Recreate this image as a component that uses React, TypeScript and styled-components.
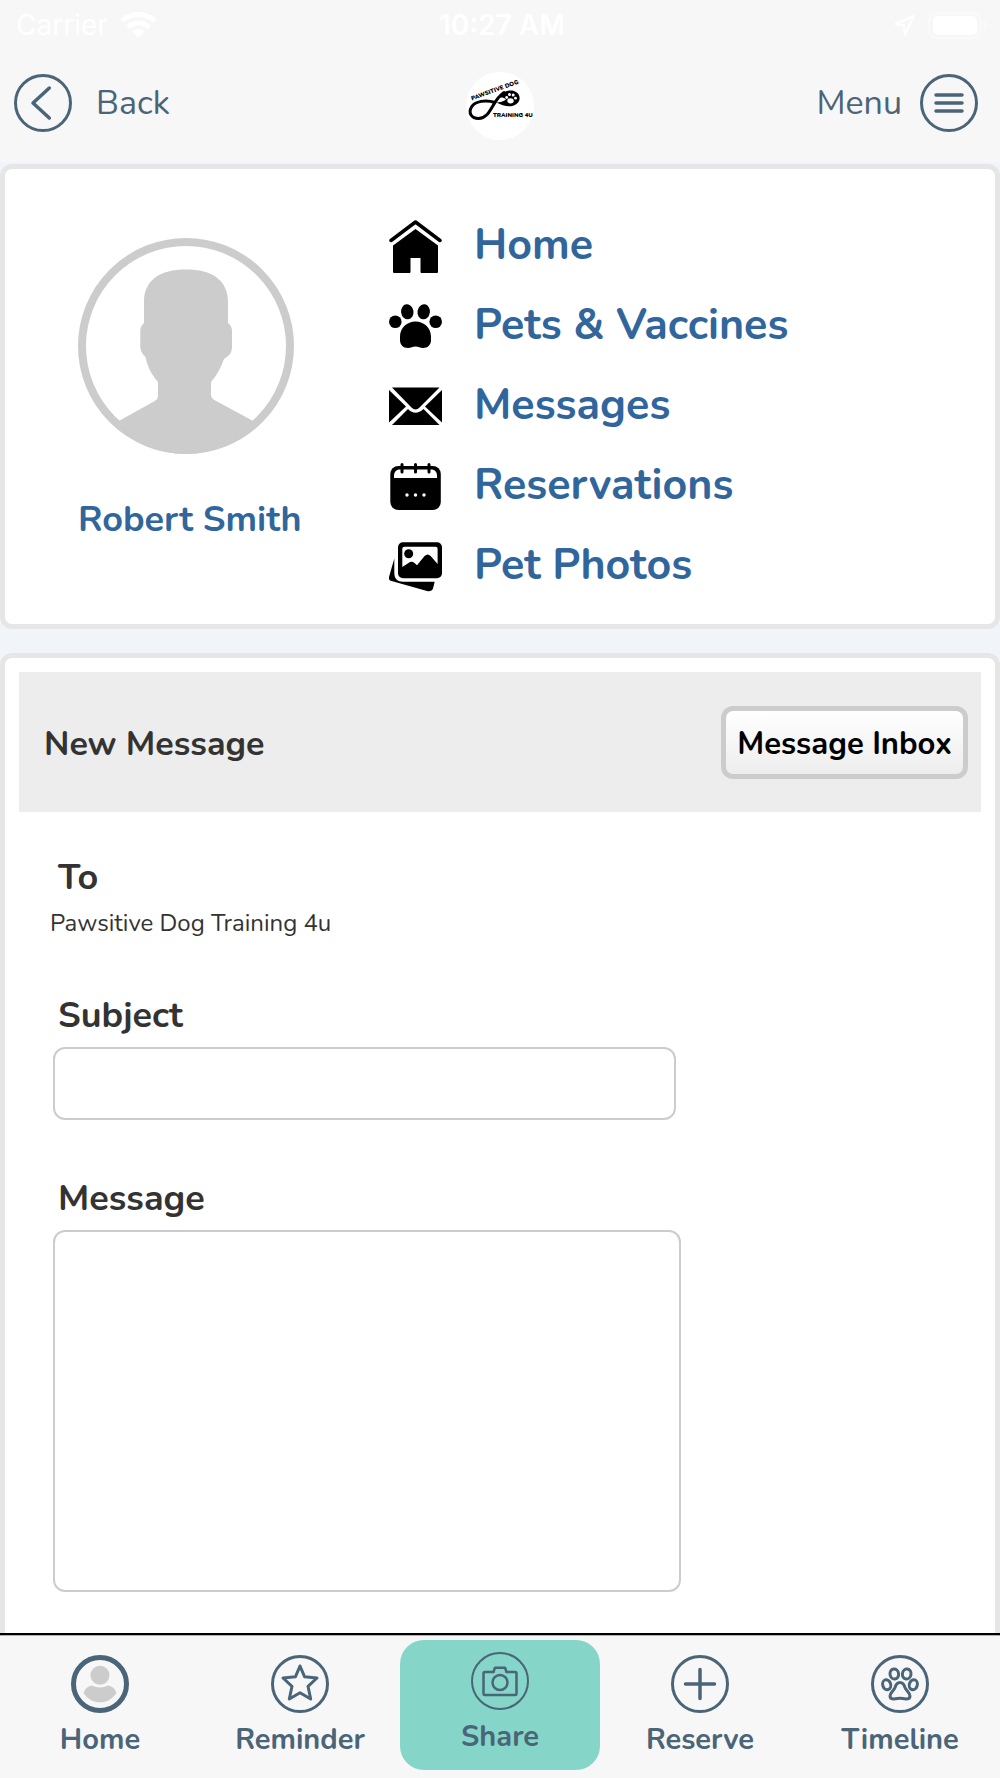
import React from "react";
import styled, { createGlobalStyle } from "styled-components";

const slate = "#4a6478";
const blue = "#31669c";
const ink = "#333333";

const GlobalStyle = createGlobalStyle`
  *, *::before, *::after { box-sizing: border-box; }
  body {
    margin: 0;
    background: #f1f5f9;
    color: ${ink};
    font-family: Nunito, Lato, "Open Sans", sans-serif;
  }
  button, input, textarea { font-family: inherit; }
  svg { display: block; flex: none; }
`;

const Screen = styled.div`
  display: flex;
  flex-direction: column;
  min-height: 100vh;
`;

const StatusBar = styled.div`
  display: grid;
  grid-template-columns: 1fr auto 1fr;
  align-items: center;
  height: 50px;
  padding: 0 12px 0 16px;
  background: #f7f7f7;
  color: #ffffff;
  font-family: Inter, sans-serif;
  font-size: 28px;
  line-height: 34px;
`;

const StatusGroup = styled.div<{ $end?: boolean }>`
  display: flex;
  align-items: center;
  justify-content: ${(p) => (p.$end ? "flex-end" : "flex-start")};
  gap: 12px;
`;

const Clock = styled.time`
  font-weight: 600;
`;

const Header = styled.header`
  display: grid;
  grid-template-columns: 1fr auto 1fr;
  align-items: start;
  height: 112px;
  padding: 22px 14px 0;
  background: #f7f7f7;
`;

const HeaderButton = styled.button<{ $end?: boolean }>`
  display: flex;
  align-items: center;
  justify-self: ${(p) => (p.$end ? "end" : "start")};
  gap: ${(p) => (p.$end ? 18 : 24)}px;
  height: 62px;
  padding: ${(p) => (p.$end ? "0 8px 0 0" : "0")};
  border: 0;
  background: none;
  color: ${slate};
  font-size: 34px;
  line-height: 44px;
`;

const Main = styled.main`
  display: flex;
  flex: 1;
  flex-direction: column;
  gap: 24px;
  padding-top: 2px;
`;

const Card = styled.section`
  border: 5px solid #e6e6e6;
  border-radius: 12px;
  background: #ffffff;
`;

const ProfileCard = styled(Card)`
  display: grid;
  grid-template-columns: 311px 1fr;
  padding: 36px 24px 19px 73px;
`;

const Profile = styled.a`
  display: flex;
  flex-direction: column;
  align-items: flex-start;
  gap: 44px;
  padding-top: 33px;
  color: ${blue};
  font-size: 36px;
  font-weight: 700;
  line-height: 44px;
  text-decoration: none;
`;

const LinkList = styled.ul`
  margin: 0;
  padding: 0;
  list-style: none;
`;

const MenuLink = styled.a`
  display: flex;
  align-items: center;
  gap: 31px;
  height: 80px;
  color: ${blue};
  font-size: 43px;
  font-weight: 700;
  line-height: 52px;
  text-decoration: none;

  svg {
    margin-top: 3px;
    color: #000000;
  }
`;

const MessageCard = styled(Card)`
  flex: 1;
  padding: 14px 14px 41px;
  border-bottom: 0;
  border-bottom-left-radius: 0;
  border-bottom-right-radius: 0;
`;

const TitleBar = styled.div`
  display: flex;
  align-items: center;
  justify-content: space-between;
  height: 140px;
  padding: 0 13px 0 25px;
  background: #ededed;
`;

const Title = styled.h1`
  margin: 0;
  padding-top: 3px;
  font-size: 34px;
  font-weight: 700;
  line-height: 44px;
`;

const InboxButton = styled.button`
  height: 73px;
  padding: 3px 11px 0;
  border: 5px solid #cccccc;
  border-radius: 12px;
  background: linear-gradient(#ffffff, #ededed);
  color: #000000;
  font-size: 31px;
  font-weight: 700;
`;

const Form = styled.form`
  display: flex;
  flex-direction: column;
  gap: 57px;
  padding: 44px 300px 0 31px;
`;

const Field = styled.div`
  display: flex;
  flex-direction: column;
  gap: 9px;
`;

const Label = styled.label`
  padding-left: 8px;
  font-size: 36px;
  font-weight: 700;
  line-height: 44px;
`;

const Recipient = styled.output`
  font-size: 24px;
  line-height: 28px;
`;

const Subject = styled.input`
  height: 73px;
  margin: 0 5px 0 3px;
  padding: 0 16px;
  border: 2px solid #cccccc;
  border-radius: 12px;
  background: #ffffff;
  font-size: 31px;
`;

const Body = styled.textarea`
  height: 362px;
  margin: 0 0 0 3px;
  padding: 16px;
  border: 2px solid #cccccc;
  border-radius: 12px;
  background: #ffffff;
  font-size: 31px;
  resize: none;
`;

const TabBar = styled.nav`
  position: sticky;
  bottom: 0;
  display: grid;
  grid-template-columns: repeat(5, 1fr);
  height: 145px;
  padding: 5px 0 8px;
  border-top: 2px solid #000000;
  background: #f7f7f7;
  box-shadow: inset 0 1px #b0b0b0;
`;

const Tab = styled.a<{ $active?: boolean }>`
  display: flex;
  flex-direction: column;
  align-items: center;
  gap: 9px;
  padding-top: ${(p) => (p.$active ? 12 : 15)}px;
  border-radius: 24px;
  background: ${(p) => (p.$active ? "#85d6c8" : "transparent")};
  color: ${slate};
  font-size: 29px;
  font-weight: 700;
  line-height: 36px;
  text-decoration: none;
`;

type DrawingProps = { size: number; box?: number; children: React.ReactNode };

const Drawing = ({ size, box = size, children }: DrawingProps) => (
  <svg width={size} height={size} viewBox={`0 0 ${box} ${box}`} fill="none" aria-hidden="true">
    {children}
  </svg>
);

type RingProps = { ring?: number; stroke?: number; children: React.ReactNode };

const RingIcon = ({ ring = 3, stroke = 3, children }: RingProps) => (
  <Drawing size={58}>
    <g stroke="currentColor" strokeLinecap="round" strokeLinejoin="round">
      <circle cx="29" cy="29" r={29 - ring / 2} strokeWidth={ring} />
      <g strokeWidth={stroke}>{children}</g>
    </g>
  </Drawing>
);

const WifiIcon = () => (
  <svg width="37" height="27" viewBox="0 0 37 27" aria-hidden="true" fill="#ffffff">
    <path d="M18.500 0C11.500 0 5 2.700 .4 7.200L3.800 10.700C7.700 7 12.900 4.900 18.500 4.900s10.800 2.100 14.700 5.800l3.400-3.500C32 2.700 25.500 0 18.500 0Z" />
    <path d="M18.500 8.600c-4.700 0-9 1.800-12.200 4.800l3.500 3.500c2.300-2.100 5.300-3.400 8.700-3.400s6.400 1.300 8.700 3.400l3.500-3.500c-3.200-3-7.500-4.800-12.200-4.800Z" />
    <path d="M18.500 17c-2.400 0-4.500.9-6.200 2.400l6.200 6.900 6.200-6.900C23 17.900 20.900 17 18.500 17Z" />
  </svg>
);

const LocationIcon = () => (
  <svg width="23" height="23" viewBox="0 0 23 23" fill="none" aria-hidden="true">
    <path d="M21 2 2 10.200l9 .9.700 9.900Z" stroke="#ffffff" strokeWidth="2" strokeLinejoin="round" />
  </svg>
);

const BatteryIcon = () => (
  <svg width="60" height="27" viewBox="0 0 60 27" aria-hidden="true">
    <rect x="1" y="1" width="52" height="25" rx="8" fill="none" stroke="#fafafa" strokeWidth="2" />
    <rect x="5" y="4" width="44" height="19" rx="5" fill="#ffffff" />
    <path d="M56 8.500c4 1.500 4 8.500 0 10Z" fill="#fafafa" />
  </svg>
);

const Logo = () => (
  <svg width="68" height="68" viewBox="0 0 68 68" role="img" aria-label="Pawsitive Dog Training 4u">
    <circle cx="34" cy="34" r="34" fill="#ffffff" />
    <path
      d="M29 30.500C20 27.500 9 29 5.500 35c-3.500 6 0 11.500 7 11.500C25 46.500 26 28 38 20.500"
      fill="none"
      stroke="#000000"
      strokeWidth="3"
      strokeLinecap="round"
    />
    <path d="M33 26c3-6 9-8.500 15-7 6.500 2 7.500 9.500 2.500 13-5 4-13 2.500-20-1.500 3 0 7.500-1 9.500-3-2-2-5-2.500-7-1.500Z" fill="#000000" />
    <g fill="#ffffff">
      <ellipse cx="44.500" cy="28.800" rx="3.200" ry="2.600" />
      <circle cx="40.700" cy="25.500" r="1.400" />
      <circle cx="43.500" cy="22.500" r="1.500" />
      <circle cx="47.200" cy="22.900" r="1.500" />
      <circle cx="49.500" cy="26.200" r="1.400" />
    </g>
    <g fill="#000000" fontFamily="Nunito, Lato, sans-serif" fontWeight="900">
      <text x="6" y="28.500" fontSize="6" transform="rotate(-20 6 28.500)">PAWSITIVE DOG</text>
      <text x="27" y="45" fontSize="6">TRAINING 4U</text>
    </g>
  </svg>
);

const Avatar = () => (
  <Drawing size={216}>
    <circle cx="108" cy="108" r="104" stroke="#cccccc" strokeWidth="8" />
    <path
      fill="#cccccc"
      d="M108 31.500C82 31.500 66 42 66 64v21c-3 3-3.700 5-3.700 8v15c0 5 2.200 8 5.200 11 2 10 6.500 18 12.500 25v14c0 2.500-2 4.500-5 6L39 184c18 20 42 32 69 32s51-12 69-32l-37-20c-4-2-7-4-7-7v-13c5-6 10-14 13-23 5-3 8-6 8-12V93c0-3-.7-5-4-8V64c0-22-16-32.500-42-32.500Z"
    />
  </Drawing>
);

const HomeIcon = () => (
  <Drawing size={54}>
    <path d="M2 20.500 26.500 2 51 20.500" stroke="currentColor" strokeWidth="3.500" strokeLinecap="round" strokeLinejoin="round" />
    <path fill="currentColor" d="M26.500 9 49 25.500V51.500c0 1-.5 1.500-1.500 1.500H33c-1 0-1.500-.5-1.500-1.500V38h-10v13.500c0 1-.5 1.500-1.500 1.500H5.500C4.500 53 4 52.500 4 51.500v-26Z" />
  </Drawing>
);

const PawIcon = () => (
  <Drawing size={54}>
    <g fill="currentColor">
      <circle cx="6.300" cy="21.800" r="6.300" />
      <circle cx="46.700" cy="21.800" r="6.300" />
      <ellipse cx="18.300" cy="11.800" rx="6.200" ry="7.500" transform="rotate(-8 18.300 11.800)" />
      <ellipse cx="34.700" cy="11.800" rx="6.200" ry="7.500" transform="rotate(8 34.700 11.800)" />
      <path d="M26.500 21.500C18 21.500 11 28 11 36.500V40c0 4.500 3 8 8 8 3 0 4.500-1.500 7.500-1.500s4.500 1.500 7.500 1.500c5 0 8-3.500 8-8v-3.500C42 28 35 21.500 26.500 21.500Z" />
    </g>
  </Drawing>
);

const MailIcon = () => (
  <Drawing size={54}>
    <path fill="currentColor" d="M3 7.500h47.500L30.500 27.500c-2.500 2.500-5.500 2.500-8 0ZM0 10 17 26.500 0 42.500ZM53 10 36 26.500l17 16ZM3 45 19 29c5 5 10 5 15.500 0l16 16Z" />
  </Drawing>
);

const CalendarIcon = () => (
  <Drawing size={54}>
    <rect x="1.300" y="6" width="50.500" height="44" rx="8" fill="currentColor" />
    <path d="M5 18v-2c0-4 2-6.500 6-6.500h31c4 0 6 2.500 6 6.500v2Z" fill="#ffffff" />
    <path d="M13 4.500v7.500M26.500 4.500v7.500M40 4.500v7.500" stroke="currentColor" strokeWidth="3" strokeLinecap="round" />
    <g fill="#ffffff">
      <circle cx="18" cy="35" r="1.700" />
      <circle cx="26.500" cy="35" r="1.700" />
      <circle cx="35" cy="35" r="1.700" />
    </g>
  </Drawing>
);

const PhotosIcon = () => (
  <Drawing size={54}>
    <rect x="9" y="2.300" width="44" height="36" rx="5" fill="currentColor" />
    <path d="M13.300 27V9c0-1.500 1-2.300 2.300-2.300h31c1.300 0 2 .8 2 2.300v15l-7-8c-2-2-4-2-6 0L28 25.300l-2.500-2.300c-2-1.700-4-1.700-6 0Z" fill="#ffffff" />
    <circle cx="19.700" cy="13.700" r="4.500" fill="currentColor" />
    <path fill="currentColor" d="M5.300 18.500 0 37c-.5 2 .5 3.500 2.500 4L38 51c3 .8 5 0 6-2.500l1.700-6.800H14c-5.500 0-8.700-3-8.700-8.700Z" />
  </Drawing>
);

const links = [
  { label: "Home", Icon: HomeIcon },
  { label: "Pets & Vaccines", Icon: PawIcon },
  { label: "Messages", Icon: MailIcon },
  { label: "Reservations", Icon: CalendarIcon },
  { label: "Pet Photos", Icon: PhotosIcon },
];

const tabs = [
  {
    label: "Home",
    icon: (
      <RingIcon ring={5}>
        <g fill="#cccccc" stroke="none">
          <circle cx="29" cy="20.300" r="9.500" />
          <path d="M21 30.500c5 2.500 11 2.500 16 0 4 .5 7 3 8.500 7.500-4 6-10 9.300-16.500 9.300S16.500 44 12.500 38c1.500-4.500 4.500-7 8.500-7.500Z" />
        </g>
      </RingIcon>
    ),
  },
  {
    label: "Reminder",
    icon: (
      <RingIcon>
        <path d="m29 11 4.500 10.700L46 23l-9 8.300L39.700 44 29 37.700 18.300 44 21 31.300 12 23l12.500-1.300Z" />
      </RingIcon>
    ),
  },
  {
    label: "Share",
    active: true,
    icon: (
      <RingIcon ring={2} stroke={2.5}>
        <path d="M14 20h8.500l1.500-4.300h10l1.500 4.300H44c1 0 1.500.5 1.500 1.500v20c0 1-.5 1.500-1.500 1.500H14c-1 0-1.500-.5-1.500-1.500v-20c0-1 .5-1.500 1.500-1.500Z" />
        <circle cx="29" cy="30.500" r="7.500" />
      </RingIcon>
    ),
  },
  {
    label: "Reserve",
    icon: (
      <RingIcon stroke={3.5}>
        <path d="M14.500 29h29M29 14.500v29" />
      </RingIcon>
    ),
  },
  {
    label: "Timeline",
    icon: (
      <RingIcon>
        <ellipse cx="23.300" cy="19" rx="4.300" ry="5" transform="rotate(-8 23.300 19)" />
        <ellipse cx="35.700" cy="19" rx="4.300" ry="5" transform="rotate(8 35.700 19)" />
        <ellipse cx="15.700" cy="29.700" rx="4" ry="5" transform="rotate(-18 15.700 29.700)" />
        <ellipse cx="42.300" cy="29.700" rx="4" ry="5" transform="rotate(18 42.300 29.700)" />
        <path d="M29 27.500c-3 0-4 1.500-5 5-1 3-5 5-5 8.500 0 2.500 2 3 4 3 2.500 0 4-.8 6-.8s3.500.8 6 .8c2 0 4-.5 4-3 0-3.500-4-5.500-5-8.500-1-3.500-2-5-5-5Z" />
      </RingIcon>
    ),
  },
];

export default function App() {
  return (
    <Screen>
      <GlobalStyle />
      <StatusBar>
        <StatusGroup>
          <span>Carrier</span>
          <WifiIcon />
        </StatusGroup>
        <Clock>10:27 AM</Clock>
        <StatusGroup $end>
          <LocationIcon />
          <BatteryIcon />
        </StatusGroup>
      </StatusBar>
      <Header>
        <HeaderButton type="button">
          <RingIcon stroke={3.5}>
            <path d="M35.300 14 19 29l16.300 15" />
          </RingIcon>
          Back
        </HeaderButton>
        <Logo />
        <HeaderButton type="button" $end>
          Menu
          <RingIcon stroke={3.5}>
            <path d="M16 21h26M16 29h26M16 37h26" />
          </RingIcon>
        </HeaderButton>
      </Header>
      <Main>
        <ProfileCard>
          <Profile href="#profile">
            <Avatar />
            Robert Smith
          </Profile>
          <LinkList>
            {links.map(({ label, Icon }) => (
              <li key={label}>
                <MenuLink href="#menu">
                  <Icon />
                  {label}
                </MenuLink>
              </li>
            ))}
          </LinkList>
        </ProfileCard>
        <MessageCard>
          <TitleBar>
            <Title>New Message</Title>
            <InboxButton type="button">Message Inbox</InboxButton>
          </TitleBar>
          <Form>
            <Field>
              <Label htmlFor="recipient">To</Label>
              <Recipient id="recipient">Pawsitive Dog Training 4u</Recipient>
            </Field>
            <Field>
              <Label htmlFor="subject">Subject</Label>
              <Subject id="subject" type="text" />
            </Field>
            <Field>
              <Label htmlFor="message">Message</Label>
              <Body id="message" />
            </Field>
          </Form>
        </MessageCard>
      </Main>
      <TabBar>
        {tabs.map(({ label, icon, active }) => (
          <Tab key={label} href="#tab" $active={active}>
            {icon}
            {label}
          </Tab>
        ))}
      </TabBar>
    </Screen>
  );
}
